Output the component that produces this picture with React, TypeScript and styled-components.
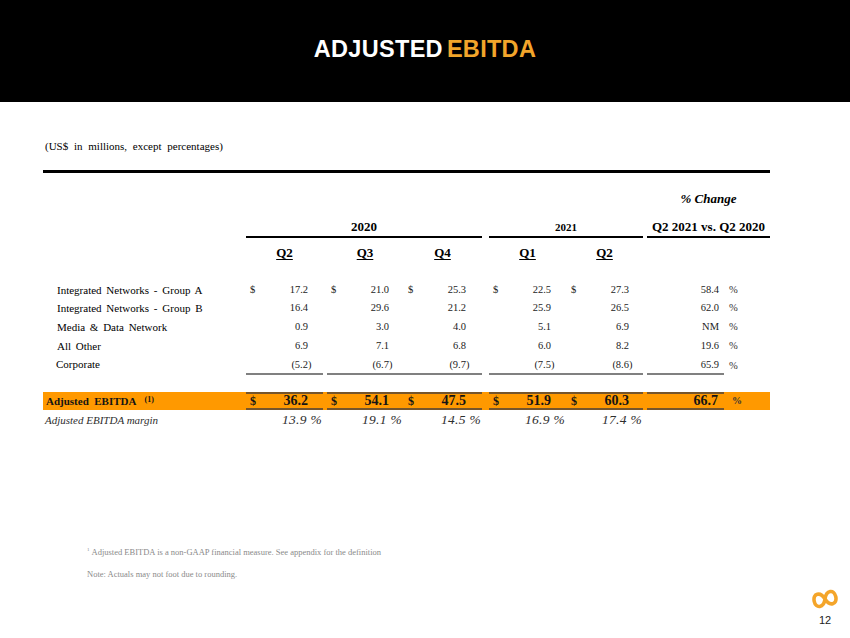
import React from 'react';
import styled, { createGlobalStyle } from 'styled-components';

const GlobalStyle = createGlobalStyle`
  html, body {
    margin: 0;
    padding: 0;
    background: #ffffff;
  }
  body {
    font-family: "Liberation Serif", "Times New Roman", serif;
    color: #000;
  }
`;

// label | Q2'20 | gap | Q3 | Q4 | gap | Q1 | Q2'21 | gap | % chg | % sign
const COLUMNS = '203px 77px 4px 76px 79px 7px 77px 77px 4px 77px 46px';
const PAD_LEFT = [4, 4, 5, 4, 5];
const PAD_RIGHT = [15, 14, 16, 15, 14];

const Slide = styled.div`
  width: 850px;
  height: 638px;
  display: flex;
  flex-direction: column;
  overflow: hidden;
`;

const Header = styled.header`
  height: 102px;
  box-sizing: border-box;
  padding-bottom: 4px;
  background: #000;
  display: flex;
  align-items: center;
  justify-content: center;
  gap: 4px;
`;

const TitleWord = styled.span<{ $accent?: boolean }>`
  font-family: "Liberation Sans", Arial, sans-serif;
  font-weight: 700;
  font-size: 23.5px;
  letter-spacing: 0.3px;
  color: ${p => (p.$accent ? '#f2a52b' : '#ffffff')};
`;

const Main = styled.main`
  padding: 37px 80px 0 43px;
`;

const Units = styled.p`
  margin: 0;
  padding-left: 2px;
  font-size: 11px;
  line-height: 14px;
  word-spacing: 3px;
`;

const HeavyRule = styled.div`
  margin-top: 16.5px;
  height: 3px;
  background: #000;
`;

const Grid = styled.div`
  display: grid;
  grid-template-columns: ${COLUMNS};
`;

const ChangeRow = styled(Grid)`
  margin-top: 19.5px;
`;

const ChangeCaption = styled.div`
  grid-column: 10 / 12;
  text-align: center;
  font-size: 13px;
  line-height: 14px;
  font-weight: 700;
  font-style: italic;
`;

const YearRow = styled(Grid)`
  margin-top: 14px;
`;

const YearCell = styled.div<{ $span: string; $small?: boolean }>`
  grid-column: ${p => p.$span};
  text-align: center;
  font-weight: 700;
  font-size: ${p => (p.$small ? 11 : 13)}px;
  line-height: 14px;
  padding-bottom: 2px;
  border-bottom: 2px solid #000;
  white-space: nowrap;
`;

const QuarterRow = styled(Grid)`
  margin-top: 8px;
`;

const Quarter = styled.div<{ $col: number }>`
  grid-column: ${p => p.$col};
  text-align: center;
  font-weight: 700;
  font-size: 13px;
  line-height: 14px;
  text-decoration: underline;
  text-underline-offset: 2px;
`;

const Body = styled.div`
  margin-top: 20.6px;
`;

const DataRow = styled(Grid)<{ $last?: boolean }>`
  line-height: ${p => (p.$last ? 17 : 18.7)}px;
  padding-top: ${p => (p.$last ? 1 : 0)}px;
`;

const Label = styled.div<{ $indent: number }>`
  padding-left: ${p => p.$indent}px;
  font-size: 11px;
  word-spacing: 2px;
  white-space: nowrap;
`;

const Gap = styled.div``;

const Money = styled.div<{ $padL: number; $padR: number; $ruled?: boolean }>`
  display: flex;
  justify-content: space-between;
  padding: 0 ${p => p.$padR}px 0 ${p => p.$padL}px;
  font-size: 10.5px;
  color: #1c1c1c;
  border-bottom: ${p => (p.$ruled ? '2px solid #808080' : 'none')};
`;

const Figure = styled.span<{ $neg?: boolean }>`
  margin-right: ${p => (p.$neg ? -3.5 : 0)}px;
`;

const PctCell = styled.div<{ $ruled?: boolean }>`
  text-align: right;
  padding-right: 5px;
  font-size: 10.5px;
  color: #1c1c1c;
  border-bottom: ${p => (p.$ruled ? '2px solid #808080' : 'none')};
`;

const PctSign = styled.div<{ $bold?: boolean }>`
  padding-left: ${p => (p.$bold ? 8 : 5)}px;
  font-size: ${p => (p.$bold ? 10 : 10.5)}px;
  font-weight: ${p => (p.$bold ? 700 : 400)};
  color: #333;
  display: flex;
  align-items: center;
`;

const TotalRow = styled(Grid)`
  margin-top: 16.3px;
  background: #ff9900;
  font-weight: 700;
  color: #141414;
`;

const TotalLabel = styled.div`
  padding-left: 3px;
  font-size: 11px;
  display: flex;
  align-items: center;
  white-space: nowrap;
`;

const Footmark = styled.sup`
  font-size: 8px;
  margin-left: 8px;
  position: relative;
  top: -1px;
`;

const TotalCell = styled.div<{ $padL?: number; $padR: number }>`
  display: flex;
  justify-content: space-between;
  align-items: center;
  padding: 0 ${p => p.$padR}px 0 ${p => p.$padL ?? 0}px;
  border-top: 2px solid #76552b;
  border-bottom: 2px solid #76552b;
  line-height: 14px;
  font-size: 14px;
`;

const TotalDollar = styled.span`
  font-size: 12px;
`;

const MarginRow = styled(Grid)`
  line-height: 20px;
  font-style: italic;
  color: #2e2e2e;
`;

const MarginLabel = styled.div`
  padding-left: 2px;
  font-size: 11px;
  white-space: nowrap;
`;

const MarginValue = styled.div`
  text-align: right;
  padding-right: 1px;
  font-size: 13.5px;
  letter-spacing: 0.3px;
`;

const Footer = styled.footer`
  margin-top: 115px;
  padding: 0 12px 0 87px;
  display: flex;
  justify-content: space-between;
  align-items: flex-start;
`;

const Notes = styled.div`
  display: flex;
  flex-direction: column;
  gap: 12px;
  font-size: 8.5px;
  line-height: 10px;
  color: #8a8a8a;
`;

const NoteMark = styled.sup`
  font-size: 5px;
  margin-right: 2px;
`;

const PageMark = styled.div`
  margin-top: 43px;
  width: 26px;
  display: flex;
  flex-direction: column;
  align-items: center;
  gap: 4px;
`;

const PageNumber = styled.span`
  font-family: "Liberation Sans", Arial, sans-serif;
  font-size: 11px;
  line-height: 12px;
  color: #222;
`;

const Logo = () => (
  <svg width="26" height="22" viewBox="0 0 26 22" fill="none">
    <path
      d="M13 11 C10 2.5 2 3 2 11 C2 19 10 19.5 13 11 C16 2.5 24 3 24 11 C24 19 16 19.5 13 11 Z"
      stroke="#f4a52a"
      strokeWidth="3.6"
      strokeLinejoin="round"
      transform="rotate(-12 13 11)"
    />
  </svg>
);

type Segment = {
  label: string;
  values: string[];
  pct: string;
  dollar?: boolean;
  indent?: number;
};

const segments: Segment[] = [
  { label: 'Integrated Networks - Group A', values: ['17.2', '21.0', '25.3', '22.5', '27.3'], pct: '58.4', dollar: true },
  { label: 'Integrated Networks - Group B', values: ['16.4', '29.6', '21.2', '25.9', '26.5'], pct: '62.0' },
  { label: 'Media & Data Network', values: ['0.9', '3.0', '4.0', '5.1', '6.9'], pct: 'NM' },
  { label: 'All Other', values: ['6.9', '7.1', '6.8', '6.0', '8.2'], pct: '19.6' },
  { label: 'Corporate', values: ['(5.2)', '(6.7)', '(9.7)', '(7.5)', '(8.6)'], pct: '65.9', indent: 13 },
];

const totals = ['36.2', '54.1', '47.5', '51.9', '60.3'];
const margins = ['13.9 %', '19.1 %', '14.5 %', '16.9 %', '17.4 %'];

// puts the blank gutter columns between the column groups
const spread = (quarters: React.ReactNode[], tail: React.ReactNode[]) => [
  quarters[0],
  <Gap key="g1" />,
  quarters[1],
  quarters[2],
  <Gap key="g2" />,
  quarters[3],
  quarters[4],
  <Gap key="g3" />,
  ...tail,
];

const App: React.FC = () => {
  return (
    <>
      <GlobalStyle />
      <Slide>
        <Header>
          <TitleWord>ADJUSTED</TitleWord>
          <TitleWord $accent>EBITDA</TitleWord>
        </Header>

        <Main>
          <Units>(US$ in millions, except percentages)</Units>
          <HeavyRule />

          <ChangeRow>
            <ChangeCaption>% Change</ChangeCaption>
          </ChangeRow>

          <YearRow>
            <YearCell $span="2 / 6">2020</YearCell>
            <YearCell $span="7 / 9" $small>2021</YearCell>
            <YearCell $span="10 / 12">Q2 2021 vs. Q2 2020</YearCell>
          </YearRow>

          <QuarterRow>
            <Quarter $col={2}>Q2</Quarter>
            <Quarter $col={4}>Q3</Quarter>
            <Quarter $col={5}>Q4</Quarter>
            <Quarter $col={7}>Q1</Quarter>
            <Quarter $col={8}>Q2</Quarter>
          </QuarterRow>

          <Body>
            {segments.map((s, i) => {
              const last = i === segments.length - 1;
              const quarters = s.values.map((v, j) => (
                <Money key={j} $padL={PAD_LEFT[j]} $padR={PAD_RIGHT[j]} $ruled={last}>
                  <span>{s.dollar ? '$' : ''}</span>
                  <Figure $neg={v.startsWith('(')}>{v}</Figure>
                </Money>
              ));
              return (
                <DataRow key={s.label} $last={last}>
                  <Label $indent={s.indent ?? 14}>{s.label}</Label>
                  {spread(quarters, [
                    <PctCell key="p" $ruled={last}>{s.pct}</PctCell>,
                    <PctSign key="s">%</PctSign>,
                  ])}
                </DataRow>
              );
            })}
          </Body>

          <TotalRow>
            <TotalLabel>
              Adjusted&nbsp; EBITDA<Footmark>(1)</Footmark>
            </TotalLabel>
            {spread(
              totals.map((v, j) => (
                <TotalCell key={j} $padL={PAD_LEFT[j]} $padR={PAD_RIGHT[j]}>
                  <TotalDollar>$</TotalDollar>
                  <span>{v}</span>
                </TotalCell>
              )),
              [
                <TotalCell key="p" $padR={6}>
                  <span />
                  <span>66.7</span>
                </TotalCell>,
                <PctSign key="s" $bold>%</PctSign>,
              ]
            )}
          </TotalRow>

          <MarginRow>
            <MarginLabel>Adjusted EBITDA margin</MarginLabel>
            {spread(
              margins.map(m => <MarginValue key={m}>{m}</MarginValue>),
              []
            )}
          </MarginRow>
        </Main>

        <Footer>
          <Notes>
            <span>
              <NoteMark>1</NoteMark>Adjusted EBITDA is a non-GAAP financial measure. See appendix for the definition
            </span>
            <span>Note: Actuals may not foot due to rounding.</span>
          </Notes>
          <PageMark>
            <Logo />
            <PageNumber>12</PageNumber>
          </PageMark>
        </Footer>
      </Slide>
    </>
  );
};

export default App;
